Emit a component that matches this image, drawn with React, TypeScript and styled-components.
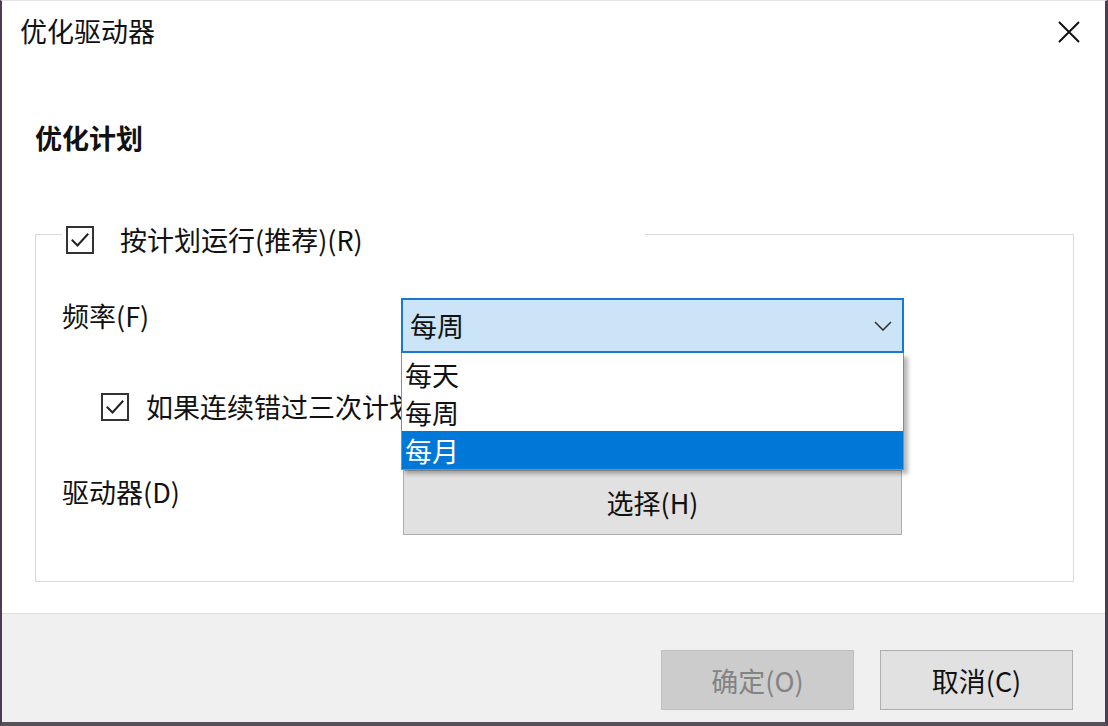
import React from "react";
import styled, { createGlobalStyle } from "styled-components";

const GlobalStyle = createGlobalStyle`
  html, body { margin: 0; padding: 0; background: #ffffff; }
  body {
    font-family: "Noto Sans CJK SC", "Noto Sans", "Liberation Sans", sans-serif;
    color: #000;
  }
  * { box-sizing: border-box; }
`;

const Window = styled.div`
  width: 1108px;
  height: 726px;
  display: flex;
  flex-direction: column;
  background: #ffffff;
  border-left: 2px solid #4a3d52;
  border-right: 3px solid #4f3b4f;
  border-bottom: 4px solid #55505a;
  border-top: 1px solid #e4e4e6;
  font-size: 27px;
`;

const TitleBar = styled.div`
  height: 63px;
  flex: none;
  display: flex;
  align-items: center;
  justify-content: space-between;
  padding: 0 22px 4px 18px;
`;

const TitleText = styled.span`
  font-size: 27px;
  line-height: 36px;
  color: #111;
`;

const CloseButton = styled.button`
  width: 28px;
  height: 28px;
  padding: 0;
  border: none;
  background: transparent;
  display: flex;
  align-items: center;
  justify-content: center;
  margin-top: 2px;
`;

const Body = styled.div`
  flex: 1;
  display: flex;
  flex-direction: column;
  padding: 56px 31px 0 33px;
`;

const SectionTitle = styled.div`
  font-size: 27px;
  font-weight: 700;
  line-height: 36px;
  color: #111;
`;

const Group = styled.fieldset`
  margin: 54px 0 0 0;
  padding: 40px 0 46px 26px;
  min-width: 0;
  border: 1px solid #d9d9d9;
  display: flex;
  flex-direction: column;
`;

const Legend = styled.legend`
  width: 583px;
  height: 48px;
  padding: 12px 0 0 4px;
  display: flex;
  align-items: center;
  gap: 26px;
  font-size: 27px;
  line-height: 36px;
  color: #111;
`;

const FieldRow = styled.div`
  display: grid;
  grid-template-columns: 339px 503px;
  align-items: start;
`;

const FieldLabel = styled.div<{ $offset?: number }>`
  font-size: 27px;
  line-height: 36px;
  margin-top: ${(p) => p.$offset ?? 0}px;
  color: #111;
`;

const SelectWrap = styled.div`
  position: relative;
  width: 503px;
`;

const SelectBox = styled.div`
  height: 55px;
  border: 2px solid #1a78d0;
  background: #cce4f7;
  display: flex;
  align-items: center;
  justify-content: space-between;
  padding: 0 10px 0 7px;
  font-size: 27px;
  color: #111;
`;

const Popup = styled.div`
  position: absolute;
  top: 100%;
  left: 0;
  width: 503px;
  background: #ffffff;
  border: 1px solid #8c8c8c;
  border-top: none;
  padding-top: 2px;
  box-shadow: 4px 4px 4px rgba(0, 0, 0, 0.28);
  z-index: 5;
`;

const Option = styled.div<{ $active?: boolean }>`
  height: 38px;
  display: flex;
  align-items: center;
  padding-left: 3px;
  font-size: 27px;
  background: ${(p) => (p.$active ? "#0078d7" : "transparent")};
  color: ${(p) => (p.$active ? "#ffffff" : "#111")};
`;

const CheckRow = styled.label`
  display: flex;
  align-items: center;
  gap: 17px;
  margin: 36px 0 0 39px;
  font-size: 27px;
  line-height: 36px;
  white-space: nowrap;
  color: #111;
`;

const Box = styled.span`
  width: 28px;
  height: 28px;
  flex: none;
  border: 2px solid #333333;
  background: #fff;
  display: flex;
  align-items: center;
  justify-content: center;
`;

const DriveRow = styled(FieldRow)`
  margin-top: 45px;
`;

const ChooseButton = styled.button`
  margin-left: 2px;
  width: 499px;
  height: 65px;
  border: 1px solid #adadad;
  background: #e1e1e1;
  font-family: inherit;
  font-size: 27px;
  color: #111;
  padding: 0;
`;

const Footer = styled.div`
  height: 109px;
  flex: none;
  background: #f0f0f0;
  border-top: 1px solid #dedede;
  display: flex;
  justify-content: flex-end;
  align-items: flex-start;
  gap: 26px;
  padding: 36px 32px 0 0;
`;

const DialogButton = styled.button<{ $disabled?: boolean }>`
  width: 193px;
  height: 60px;
  padding: 0;
  font-family: inherit;
  font-size: 27px;
  border: 1px solid ${(p) => (p.$disabled ? "#bfbfbf" : "#adadad")};
  background: ${(p) => (p.$disabled ? "#cccccc" : "#e1e1e1")};
  color: ${(p) => (p.$disabled ? "#838383" : "#111")};
`;

const Check = () => (
  <Box>
    <svg width="22" height="22" viewBox="0 0 22 22" fill="none">
      <path d="M3.5 11.5 L8.5 16.5 L18.5 5.5" stroke="#222" strokeWidth="2" strokeLinecap="square" />
    </svg>
  </Box>
);

export default function App() {
  return (
    <>
      <GlobalStyle />
      <Window>
        <TitleBar>
          <TitleText>优化驱动器</TitleText>
          <CloseButton aria-label="关闭">
            <svg width="24" height="24" viewBox="0 0 24 24" fill="none">
              <path d="M2 2 L22 22 M22 2 L2 22" stroke="#111" strokeWidth="2" />
            </svg>
          </CloseButton>
        </TitleBar>
        <Body>
          <SectionTitle>优化计划</SectionTitle>
          <Group>
            <Legend>
              <Check />
              <span>按计划运行(推荐)(R)</span>
            </Legend>
            <FieldRow>
              <FieldLabel>频率(F)</FieldLabel>
              <SelectWrap>
                <SelectBox>
                  <span>每周</span>
                  <svg width="18" height="10" viewBox="0 0 18 10" fill="none">
                    <path d="M1 1 L9 9 L17 1" stroke="#333" strokeWidth="1.6" />
                  </svg>
                </SelectBox>
                <Popup>
                  <Option>每天</Option>
                  <Option>每周</Option>
                  <Option $active>每月</Option>
                </Popup>
              </SelectWrap>
            </FieldRow>
            <CheckRow>
              <Check />
              <span>如果连续错过三次计划的运行，则增加任务优先级(I)</span>
            </CheckRow>
            <DriveRow>
              <FieldLabel $offset={4}>驱动器(D)</FieldLabel>
              <ChooseButton>选择(H)</ChooseButton>
            </DriveRow>
          </Group>
        </Body>
        <Footer>
          <DialogButton $disabled>确定(O)</DialogButton>
          <DialogButton>取消(C)</DialogButton>
        </Footer>
      </Window>
    </>
  );
}
